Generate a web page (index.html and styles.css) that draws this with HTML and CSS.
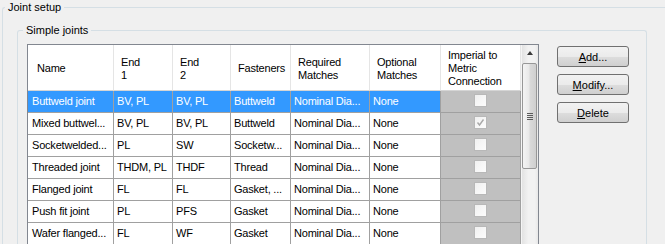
FILE: index.html
```html
<html lang="en">
<head>
  <meta charset="UTF-8">
  <title>Joint setup</title>
  <link rel="stylesheet" href="styles.css">
</head>
<body>
  <fieldset class="group outer">
    <legend>Joint setup</legend>

    <fieldset class="group inner">
      <legend>Simple joints</legend>

      <div class="panel">
        <div class="listview">
          <table class="grid">
            <thead>
              <tr>
                <th class="c-name">Name</th>
                <th class="c-end1">End<br>1</th>
                <th class="c-end2">End<br>2</th>
                <th class="c-fast">Fasteners</th>
                <th class="c-req">Required<br>Matches</th>
                <th class="c-opt">Optional<br>Matches</th>
                <th class="c-imp">Imperial to<br>Metric<br>Connection</th>
              </tr>
            </thead>
            <tbody>
              <tr class="selected">
                <td>Buttweld joint</td><td>BV, PL</td><td>BV, PL</td><td>Buttweld</td><td>Nominal Dia...</td><td>None</td>
                <td class="imp"><span class="check"></span></td>
              </tr>
              <tr>
                <td>Mixed buttwel...</td><td>BV, PL</td><td>BV, PL</td><td>Buttweld</td><td>Nominal Dia...</td><td>None</td>
                <td class="imp"><span class="check"><svg width="9" height="9" viewBox="0 0 9 9"><polyline points="1.5,4.5 3.5,7 7.5,1.5" fill="none" stroke="#a8a8a8" stroke-width="1.4"/></svg></span></td>
              </tr>
              <tr>
                <td>Socketwelded...</td><td>PL</td><td>SW</td><td>Socketw...</td><td>Nominal Dia...</td><td>None</td>
                <td class="imp"><span class="check"></span></td>
              </tr>
              <tr>
                <td>Threaded joint</td><td>THDM, PL</td><td>THDF</td><td>Thread</td><td>Nominal Dia...</td><td>None</td>
                <td class="imp"><span class="check"></span></td>
              </tr>
              <tr>
                <td>Flanged joint</td><td>FL</td><td>FL</td><td>Gasket, ...</td><td>Nominal Dia...</td><td>None</td>
                <td class="imp"><span class="check"></span></td>
              </tr>
              <tr>
                <td>Push fit joint</td><td>PL</td><td>PFS</td><td>Gasket</td><td>Nominal Dia...</td><td>None</td>
                <td class="imp"><span class="check"></span></td>
              </tr>
              <tr>
                <td>Wafer flanged...</td><td>FL</td><td>WF</td><td>Gasket</td><td>Nominal Dia...</td><td>None</td>
                <td class="imp"><span class="check"></span></td>
              </tr>
            </tbody>
          </table>

          <div class="vscroll">
            <div class="arrow"><span class="tri"></span></div>
            <div class="thumb"><span class="grip"></span></div>
          </div>
        </div>

        <div class="actions">
          <button><u>A</u>dd...</button>
          <button><u>M</u>odify...</button>
          <button><u>D</u>elete</button>
        </div>
      </div>
    </fieldset>
  </fieldset>
</body>
</html>
```

FILE: styles.css
```css
body {
  margin: 0;
  background: #f0f0f0;
  font-family: "Liberation Sans", Arial, sans-serif;
  font-size: 11px;
  color: #000;
  height: 244px;
  overflow: hidden;
}
.group {
  border: 1px solid #d5dfe5;
  border-bottom: none;
  border-radius: 3px 3px 0 0;
  margin: 0;
  box-sizing: border-box;
}
.group > legend {
  padding: 0 3px;
  line-height: 13px;
}
.outer {
  margin: 1px 0 0 2px;
  padding: 10px 0 0 14px;
  width: 663px;
  height: 243px;
  border-right: none;
  border-top-right-radius: 0;
}
.outer > legend {
  margin-left: -12px;
}
.inner {
  width: 630px;
  height: 220px;
  padding: 7px 0 0 9px;
}
.inner > legend {
  margin-left: -4px;
}
.panel {
  display: flex;
  align-items: flex-start;
}
.listview {
  display: flex;
  align-items: flex-start;
  width: 512px;
  height: 200px;
  border: 1px solid #828790;
  border-bottom: none;
  background: #fff;
  box-sizing: border-box;
  overflow: hidden;
}
.grid {
  border-collapse: separate;
  border-spacing: 0;
  table-layout: fixed;
  width: 493px;
  flex: none;
  font-family: "Liberation Sans", Arial, sans-serif;
  font-size: 11px;
  letter-spacing: -0.2px;
}
.grid th, .grid td {
  box-sizing: border-box;
  white-space: nowrap;
  overflow: hidden;
  line-height: 13px;
  text-align: left;
}
.grid th {
  font-weight: normal;
  padding: 4px 2px 2px 7px;
  border-right: 1px solid #e5e5e5;
  border-bottom: 1px solid #d5d5d5;
  background: #fff;
  vertical-align: middle;
}
.grid td {
  padding: 4px 2px 4px 3px;
  border-right: 1px solid #a0a0a0;
  border-bottom: 1px solid #a0a0a0;
}
.c-name { width: 86px; padding-left: 9px !important; }
.c-end1 { width: 59px; }
.c-end2 { width: 58px; }
.c-fast { width: 60px; }
.c-req { width: 79px; }
.c-opt { width: 71px; }
.c-imp { width: 80px; }
.grid td:first-child {
  padding-left: 4px;
}
.selected td {
  background: #3399ff;
  color: #fff;
}
.grid td.imp {
  background: #c0c0c0;
  text-align: center;
  padding: 3px 0 0 0;
  height: 22px;
  vertical-align: top;
}
.check {
  display: inline-block;
  width: 13px;
  height: 13px;
  box-sizing: border-box;
  border: 1px solid #b8b8b8;
  background: linear-gradient(135deg, #f0f0f0, #fcfcfc);
  vertical-align: top;
}
.check svg {
  display: block;
  margin: 1px 0 0 1px;
}
.vscroll {
  width: 17px;
  height: 100%;
  flex: none;
  background: linear-gradient(to right, #e3e3e3, #f2f2f2 40%, #f2f2f2 80%, #e8e8e8);
  border-left: 1px solid #f5f5f5;
  box-sizing: border-box;
}
.arrow {
  height: 17px;
  display: flex;
  align-items: center;
  justify-content: center;
}
.tri {
  width: 0;
  height: 0;
  border-left: 3.5px solid transparent;
  border-right: 3.5px solid transparent;
  border-bottom: 4px solid #3a3a3a;
  margin-top: -1px;
}
.thumb {
  height: 106px;
  margin: 1px 1px 0 0;
  border: 1px solid #979797;
  border-radius: 2px;
  box-sizing: border-box;
  background: linear-gradient(to right, #f4f4f4, #e9e9e9 45%, #d9d9d9 55%, #cfcfcf);
  display: flex;
  align-items: center;
  justify-content: center;
}
.grip {
  width: 6px;
  height: 7px;
  background: repeating-linear-gradient(#5b5b5b 0 1px, transparent 1px 2px);
  margin-left: 1px;
}
.actions {
  display: flex;
  flex-direction: column;
  gap: 7px;
  margin: 2px 0 0 18px;
}
button {
  width: 72px;
  height: 21px;
  padding: 0;
  font-family: "Liberation Sans", Arial, sans-serif;
  font-size: 11px;
  color: #000;
  border: 1px solid #707070;
  border-radius: 3px;
  background: linear-gradient(#f2f2f2 0%, #ebebeb 50%, #dddddd 51%, #cfcfcf 100%);
}
```
